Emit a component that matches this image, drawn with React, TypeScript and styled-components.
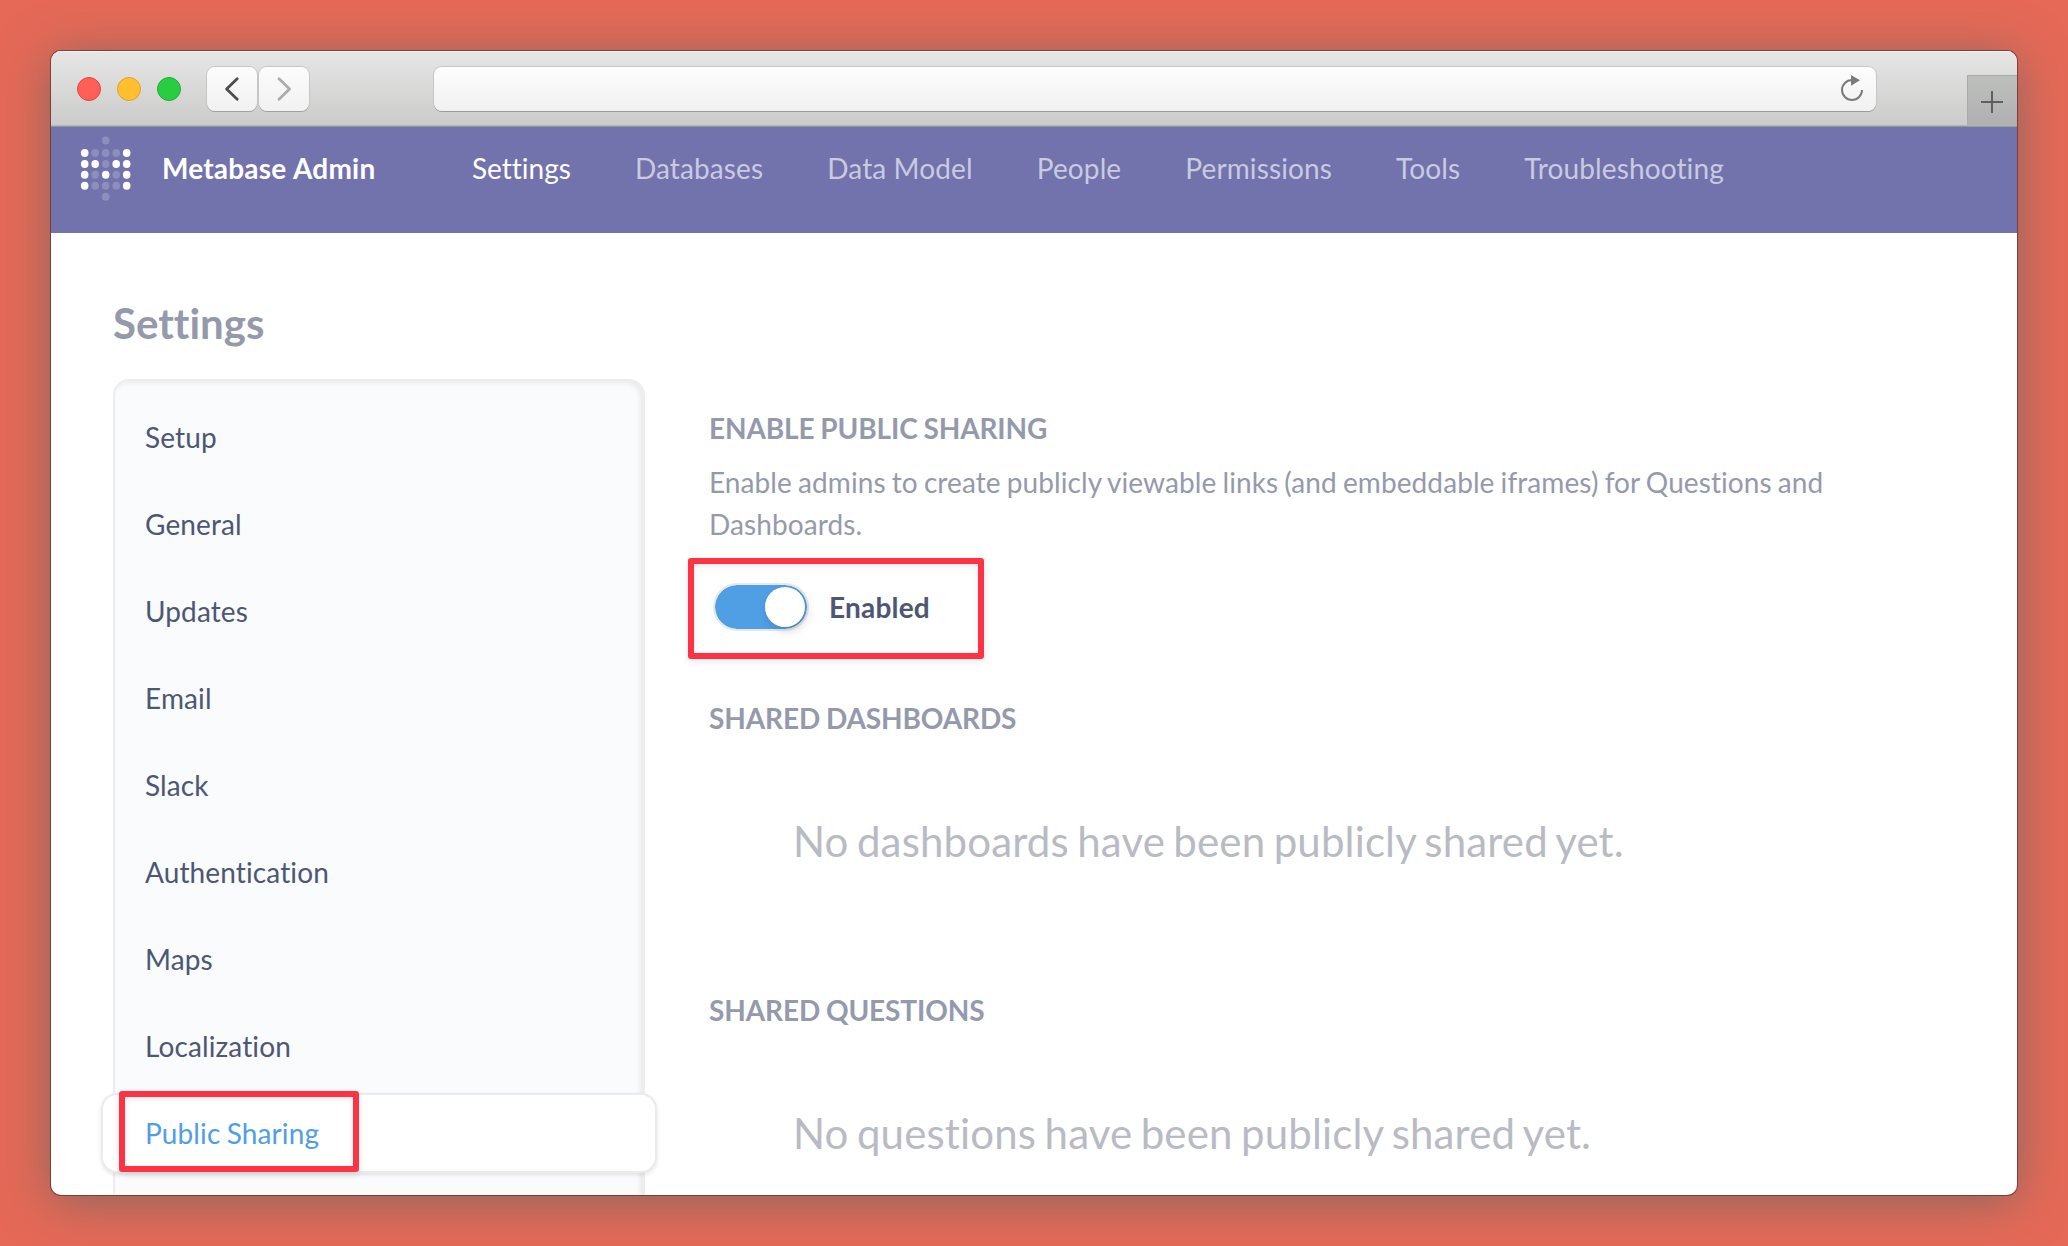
import React from "react";
import styled, { createGlobalStyle } from "styled-components";

const GlobalStyle = createGlobalStyle`
  *, *::before, *::after { box-sizing: border-box; }
  html, body { margin: 0; padding: 0; }
  body {
    background: #e66957;
    font-family: Lato, "Open Sans", sans-serif;
    font-size: 28px;
    font-variant-ligatures: none;
    letter-spacing: 0.12px;
    color: #4c5773;
  }
  ul { list-style: none; margin: 0; padding: 0; }
  h1, h2, p { margin: 0; }
`;

const Desktop = styled.div`
  width: 2068px;
  height: 1246px;
  padding: 51px;
  overflow: hidden;
  background: #e66957;
`;

const Window = styled.div`
  display: flex;
  flex-direction: column;
  width: 1966px;
  height: 1144px;
  border-radius: 10px;
  overflow: hidden;
  background: #fff;
  box-shadow:
    0 0 0 1px rgba(70, 20, 20, 0.5),
    0 6px 50px rgba(104, 104, 98, 0.78);
`;

const Chrome = styled.div`
  display: flex;
  flex: none;
  align-items: flex-start;
  height: 76px;
  background: linear-gradient(#e6e6e6, #cbcbca);
  border-bottom: 1px solid #969a97;
  box-shadow: inset 0 1px 0 #f6f6f6, inset 0 -1px 0 #b4b6b4;
`;

const Lights = styled.div`
  display: flex;
  gap: 16px;
  padding: 26px 0 0 26px;
`;

const Light = styled.span<{ $fill: string; $edge: string }>`
  width: 24px;
  height: 24px;
  border-radius: 50%;
  background: ${(p) => p.$fill};
  border: 1px solid ${(p) => p.$edge};
`;

const NavButtons = styled.div`
  display: flex;
  gap: 2px;
  margin: 16px 0 0 26px;
`;

const NavButton = styled.button`
  display: flex;
  align-items: center;
  justify-content: center;
  width: 50px;
  height: 44px;
  padding: 0;
  border: 0;
  border-radius: 8px;
  background: linear-gradient(#fcfcfc, #f1f1f1);
  box-shadow: 0 1px 0 0 #a0a0a0, 0 0 0 1px #c6c6c6;
`;

const AddressBar = styled.div`
  display: flex;
  align-items: center;
  justify-content: flex-end;
  width: 1442px;
  height: 44px;
  margin: 16px 0 0 125px;
  padding-right: 12px;
  border-radius: 8px;
  background: linear-gradient(#fdfdfd, #f1f1f1);
  box-shadow: 0 1px 0 0 #999c99, 0 0 0 1px #c6c6c6;
`;

const NewTab = styled.div`
  display: flex;
  align-items: center;
  justify-content: center;
  width: 50px;
  height: 50px;
  margin: 24px 0 0 auto;
  padding-top: 3px;
  background: linear-gradient(#bdbfbd, #b0b0b0);
  box-shadow: inset 1px 1px 0 #a9abaa;
`;

const AdminBar = styled.header`
  display: flex;
  flex: none;
  align-items: center;
  height: 106px;
  padding: 0 0 24px 27px;
  background: #7272ad;
`;

const Brand = styled.div`
  width: 310px;
  margin-left: 24px;
  font-weight: 700;
  line-height: 34px;
  letter-spacing: 0.2px;
  word-spacing: 0.5px;
  color: #fff;
`;

const AdminNav = styled.nav`
  display: flex;
  gap: 64px;
`;

const AdminLink = styled.a<{ $active?: boolean }>`
  line-height: 34px;
  white-space: nowrap;
  letter-spacing: ${(p) => (p.$active ? "0" : "0.12px")};
  color: ${(p) => (p.$active ? "#fff" : "rgba(255, 255, 255, 0.63)")};
`;

const Body = styled.main`
  display: flex;
  flex: 1;
  min-height: 0;
  gap: 64px;
  padding-left: 62px;
`;

const SideColumn = styled.aside`
  display: flex;
  flex: none;
  flex-direction: column;
  width: 532px;
  padding-top: 65px;
`;

const PageTitle = styled.h1`
  flex: none;
  height: 81px;
  font-size: 42px;
  line-height: 50px;
  font-weight: 700;
  letter-spacing: 0;
  color: #949aab;
`;

const SideMenu = styled.ul`
  flex: none;
  height: 900px;
  padding-top: 16px;
  border: 2px solid #ededee;
  border-radius: 16px;
  background: #fafbfd;
  box-shadow: inset -3px 2px 5px rgba(0, 0, 0, 0.07);
`;

const SideItem = styled.li<{ $active?: boolean }>`
  position: relative;
  display: flex;
  align-items: center;
  height: 80px;
  margin: 0 -14px 7px;
  padding: 0 0 0 42px;
  border: 2px solid ${(p) => (p.$active ? "#ebebec" : "transparent")};
  border-radius: 16px;
  background: ${(p) => (p.$active ? "#fff" : "transparent")};
  box-shadow: ${(p) => (p.$active ? "0 2px 4px rgba(0, 0, 0, 0.1)" : "none")};
  line-height: 34px;
  word-spacing: -1px;
  color: ${(p) => (p.$active ? "#509ee3" : "#4c5773")};
`;

const Highlight = styled.span<{ $x: number; $y: number; $w: number; $h: number }>`
  position: absolute;
  left: ${(p) => p.$x}px;
  top: ${(p) => p.$y}px;
  width: ${(p) => p.$w}px;
  height: ${(p) => p.$h}px;
  border: 6px solid #fb3344;
  border-radius: 3px;
  box-shadow: 0 2px 6px rgba(0, 0, 0, 0.12), inset 0 2px 6px rgba(0, 0, 0, 0.1);
`;

const Content = styled.section`
  display: flex;
  flex-direction: column;
  width: 1160px;
  padding-top: 178px;
`;

const SectionTitle = styled.h2`
  font-size: 28px;
  line-height: 34px;
  font-weight: 700;
  letter-spacing: -0.12px;
  word-spacing: -0.8px;
  text-transform: uppercase;
  color: #949aab;
`;

const Description = styled.p`
  margin-top: 16px;
  line-height: 42px;
  letter-spacing: 0.09px;
  word-spacing: -1.15px;
  color: #949aab;
`;

const ToggleRow = styled.div`
  position: relative;
  display: flex;
  align-items: center;
  gap: 20px;
  margin: 38px 0 70px 4px;
`;

const Track = styled.span`
  display: flex;
  justify-content: flex-end;
  width: 96px;
  height: 48px;
  padding: 2px;
  border: 2px solid #e8e8ea;
  border-radius: 24px;
  background: #509ee3;
  background-clip: padding-box;
`;

const Knob = styled.span`
  width: 40px;
  height: 40px;
  border-radius: 50%;
  background: #fff;
  box-shadow: 2px 4px 10px rgba(0, 0, 0, 0.15);
`;

const ToggleLabel = styled.span`
  font-weight: 700;
  line-height: 34px;
  letter-spacing: 0.2px;
`;

const EmptyState = styled.p<{ $after: number }>`
  margin: 81px 0 ${(p) => p.$after}px 84px;
  font-size: 42px;
  line-height: 50px;
  letter-spacing: 0.15px;
  word-spacing: -2.5px;
  color: #b8bbc3;
`;

const LOGO_ROWS = ["10001", "11011", "10101", "10001"];

function Logo() {
  return (
    <svg width="60" height="70" viewBox="0 0 60 70" fill="#fff">
      <ellipse cx="27.7" cy="7.5" rx="3.8" ry="4" opacity=".2" />
      {LOGO_ROWS.map((row, r) =>
        row.split("").map((dot, c) => (
          <ellipse
            key={`${r}-${c}`}
            cx={6.7 + c * 10.5}
            cy={20 + r * 10.9}
            rx="3.8"
            ry="4"
            opacity={dot === "1" ? 1 : 0.2}
          />
        ))
      )}
      <ellipse cx="27.7" cy="63.7" rx="3.8" ry="4" opacity=".2" />
    </svg>
  );
}

function Chevron({ flip, color }: { flip?: boolean; color: string }) {
  return (
    <svg width="50" height="44" viewBox="0 0 50 44" fill="none">
      <path
        d={flip ? "M20 11.7 L30.6 22 L20 32.3" : "M30.2 11.7 L19.6 22 L30.2 32.3"}
        stroke={color}
        strokeWidth="2.8"
        strokeLinecap="round"
        strokeLinejoin="round"
      />
    </svg>
  );
}

const NAV = ["Settings", "Databases", "Data Model", "People", "Permissions", "Tools", "Troubleshooting"];
const MENU = ["Setup", "General", "Updates", "Email", "Slack", "Authentication", "Maps", "Localization", "Public Sharing"];

export default function App() {
  return (
    <Desktop>
      <GlobalStyle />
      <Window>
        <Chrome>
          <Lights>
            <Light $fill="#ff5f57" $edge="#e2463f" />
            <Light $fill="#ffbf2f" $edge="#e0a030" />
            <Light $fill="#28cd41" $edge="#1fae33" />
          </Lights>
          <NavButtons>
            <NavButton aria-label="Back"><Chevron color="#4d4d4d" /></NavButton>
            <NavButton aria-label="Forward"><Chevron flip color="#acacac" /></NavButton>
          </NavButtons>
          <AddressBar>
            <svg width="24" height="28" viewBox="0 0 24 28" fill="none">
              <path d="M22 15 A10 10 0 1 1 12 5" stroke="#7b7b7b" strokeWidth="2" />
              <path d="M11 0 L20 5.3 L11 10.8 Z" fill="#7b7b7b" />
            </svg>
          </AddressBar>
          <NewTab>
            <svg width="22" height="22" viewBox="0 0 22 22">
              <path d="M11 0 V22 M0 11 H22" stroke="#5f5f5f" strokeWidth="2" />
            </svg>
          </NewTab>
        </Chrome>
        <AdminBar>
          <Logo />
          <Brand>Metabase Admin</Brand>
          <AdminNav>
            {NAV.map((name, i) => (
              <AdminLink key={name} $active={i === 0}>{name}</AdminLink>
            ))}
          </AdminNav>
        </AdminBar>
        <Body>
          <SideColumn>
            <PageTitle>Settings</PageTitle>
            <SideMenu>
              {MENU.map((name) => {
                const active = name === "Public Sharing";
                return (
                  <SideItem key={name} $active={active}>
                    {name}
                    {active && <Highlight $x={16} $y={-4} $w={240} $h={81} />}
                  </SideItem>
                );
              })}
            </SideMenu>
          </SideColumn>
          <Content>
            <SectionTitle>Enable Public Sharing</SectionTitle>
            <Description>
              Enable admins to create publicly viewable links (and embeddable iframes) for Questions and Dashboards.
            </Description>
            <ToggleRow>
              <Track><Knob /></Track>
              <ToggleLabel>Enabled</ToggleLabel>
              <Highlight $x={-25} $y={-25} $w={296} $h={101} />
            </ToggleRow>
            <SectionTitle>Shared Dashboards</SectionTitle>
            <EmptyState $after={127}>No dashboards have been publicly shared yet.</EmptyState>
            <SectionTitle>Shared Questions</SectionTitle>
            <EmptyState $after={0}>No questions have been publicly shared yet.</EmptyState>
          </Content>
        </Body>
      </Window>
    </Desktop>
  );
}
